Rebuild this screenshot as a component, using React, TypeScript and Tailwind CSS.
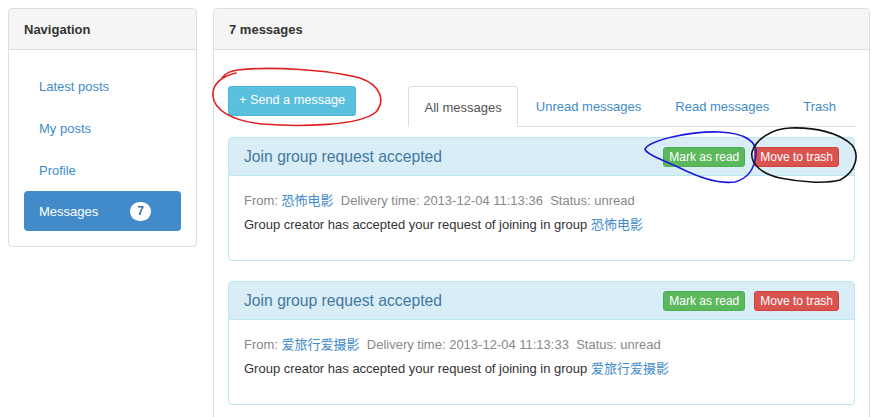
type Message = {
  id: number;
  title: string;
  from: string;
  time: string;
  status: string;
};

const messages: Message[] = [
  {
    id: 1,
    title: "Join group request accepted",
    from: "恐怖电影",
    time: "2013-12-04 11:13:36",
    status: "unread",
  },
  {
    id: 2,
    title: "Join group request accepted",
    from: "爱旅行爱摄影",
    time: "2013-12-04 11:13:33",
    status: "unread",
  },
];

const navItems = ["Latest posts", "My posts", "Profile"];
const tabs = ["Unread messages", "Read messages"];

const cjk = "font-['Liberation_Sans','Noto_Sans_CJK_SC',sans-serif]";

function MessagePanel({ message }: { message: Message }) {
  return (
    <article className="mb-[20px] rounded border border-[#bce8f1] bg-white">
      <div className="flex h-[38px] items-center justify-between border-b border-[#bce8f1] bg-[#d9edf7] pl-[15px] pr-[15px]">
        <h3 className="text-[15.7px] text-[#4279a0]">{message.title}</h3>
        <div className="flex gap-[9px] text-[12px] text-white">
          <button className="h-[20px] rounded-[3px] border border-[#4cae4c] bg-[#5cb85c] px-[5px] leading-[18px]">
            Mark as read
          </button>
          <button className="h-[20px] rounded-[3px] border border-[#d43f3a] bg-[#d9534f] px-[5px] leading-[18px]">
            Move to trash
          </button>
        </div>
      </div>
      <div className="px-[15px] pb-[25px] pt-[15px] text-[13px] leading-[20px]">
        <p className="text-[#888]">
          From: <span className="text-[#428bca]">{message.from}</span>
          &nbsp;&nbsp;Delivery time: {message.time}&nbsp;&nbsp;Status:{" "}
          {message.status}
        </p>
        <p className="mt-[4px] text-[#333]">
          Group creator has accepted your request of joining in group{" "}
          <span className="text-[#428bca]">{message.from}</span>
        </p>
      </div>
    </article>
  );
}

function Annotations() {
  return (
    <svg
      className="pointer-events-none absolute left-0 top-0"
      width="877"
      height="417"
      fill="none"
      strokeWidth="1.6"
      strokeLinecap="round"
    >
      <path
        stroke="#e02020"
        d="M222 78 C226 72 232 71 238 70 C270 66 330 70 360 78 C380 85 386 100 376 112 C360 126 300 127 262 124 C232 121 214 110 213 96 C212 84 222 76 236 73"
      />
      <path
        stroke="#1a1adc"
        d="M645 149 C650 140 690 131 720 132 C745 133 758 142 756 155 C754 170 748 178 735 182 C720 184 700 178 680 168 C662 160 646 154 645 149 Z"
      />
      <path
        stroke="#111"
        d="M752 152 C756 140 770 129 790 128 C815 127 840 133 852 145 C860 155 856 172 840 180 C825 184 800 182 780 178 C762 174 750 164 752 152 Z"
      />
    </svg>
  );
}

export default function App() {
  return (
    <main
      className={`relative h-[417px] w-[877px] overflow-hidden bg-white text-[13px] text-[#333] ${cjk}`}
    >
      <div className="flex gap-[16px] pl-[8px] pt-[8px]">
        <aside className="w-[189px] self-start rounded border border-[#ddd] bg-white">
          <div className="flex h-[41px] items-center rounded-t border-b border-[#ddd] bg-[#f5f5f5] px-[15px] pt-[2px] font-bold">
            Navigation
          </div>
          <nav className="flex flex-col gap-[2px] p-[15px]">
            {navItems.map((item) => (
              <a
                key={item}
                className="h-[40px] px-[15px] pt-[2px] leading-[40px] text-[#428bca]"
              >
                {item}
              </a>
            ))}
            <a className="flex h-[40px] items-center rounded bg-[#428bca] px-[15px] pt-[1px] text-white">
              Messages
              <span className="ml-[32px] rounded-[10px] bg-white px-[7px] text-[12px] font-bold leading-[19px] text-[#3a6f9e]">
                7
              </span>
            </a>
          </nav>
        </aside>

        <section className="w-[657px] rounded border border-[#ddd] bg-white">
          <div className="flex h-[41px] items-center rounded-t border-b border-[#ddd] bg-[#f5f5f5] px-[15px] pt-[2px] font-bold">
            7 messages
          </div>
          <div className="px-[14px] pt-[36px]">
            <div className="flex items-start justify-between">
              <button className="h-[30px] rounded-[3px] border border-[#46b8da] bg-[#5bc0de] px-[10px] text-[12.7px] text-white">
                + Send a message
              </button>
              <ul className="flex border-b border-[#ddd]">
                <li className="-mb-px h-[41px] rounded-t border border-[#ddd] border-b-white bg-white px-[15px] leading-[41px] text-[#555]">
                  All messages
                </li>
                {tabs.map((tab) => (
                  <li
                    key={tab}
                    className="ml-[2px] h-[40px] px-[16px] leading-[42px] text-[#428bca]"
                  >
                    {tab}
                  </li>
                ))}
                <li className="ml-[2px] h-[40px] pl-[16px] pr-[19px] leading-[42px] text-[#428bca]">
                  Trash
                </li>
              </ul>
            </div>
            <div className="mt-[10px]">
              {messages.map((message) => (
                <MessagePanel key={message.id} message={message} />
              ))}
            </div>
          </div>
        </section>
      </div>
      <Annotations />
    </main>
  );
}
